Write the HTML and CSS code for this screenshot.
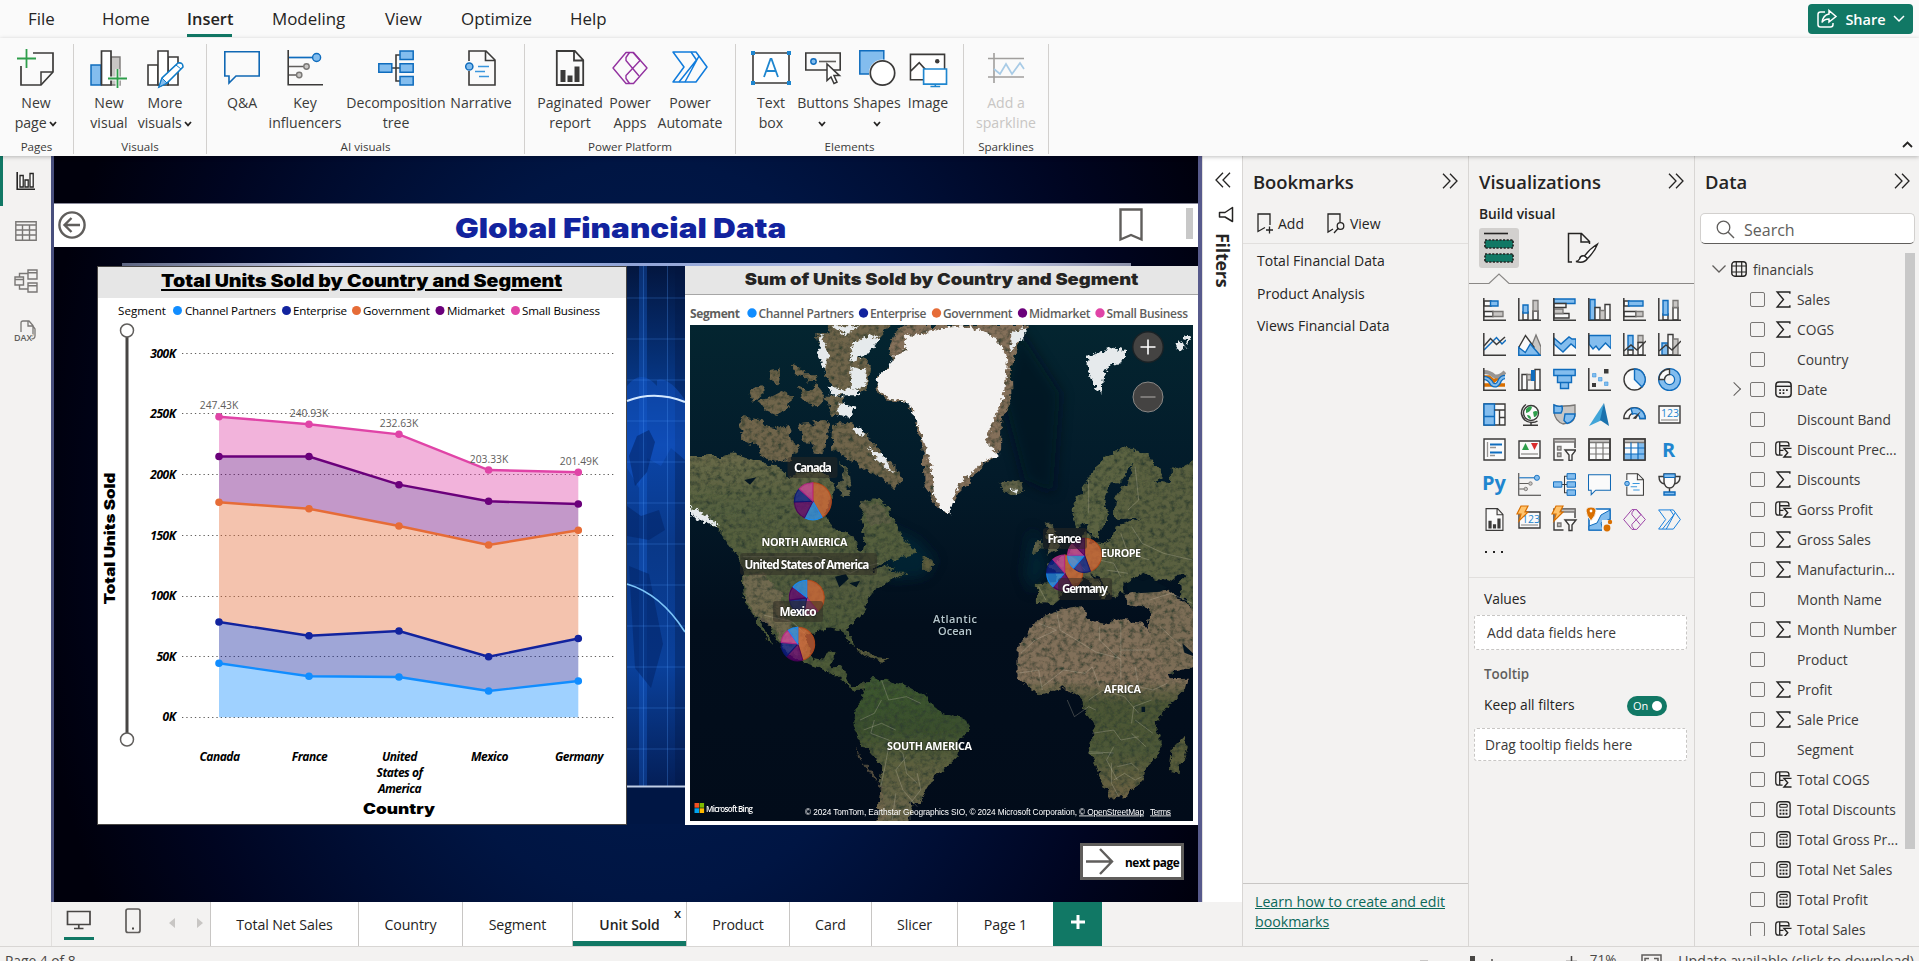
FILE: index.html
```html
<!DOCTYPE html>
<html lang="en">
<head>
<meta charset="utf-8">
<title>Global Financial Data</title>
<link rel="stylesheet" href="styles.css">
</head>
<body>
<svg class="defs" width="0" height="0" aria-hidden="true">
  <defs>
    <symbol id="i-chev" viewBox="0 0 8 6"><path d="M1 1l3 3.4L7 1" fill="none" stroke="#252423" stroke-width="1.7"/></symbol>
    <symbol id="i-dbl" viewBox="0 0 16 16"><path d="M1 .8L8 8l-7 7.2M8 .8L15 8l-7 7.2" fill="none" stroke="#252423" stroke-width="1.3"/></symbol>
    <symbol id="i-key" viewBox="0 0 36 36"><path d="M1.2 0v34.8H36" fill="none" stroke="#3b3a39" stroke-width="1.6"/><path d="M2 7.5h24" stroke="#0f6cbd" stroke-width="1.7"/><path d="M2 16.5h15M2 25h8" stroke="#605e5c" stroke-width="1.6"/><circle cx="29.6" cy="7.5" r="4" fill="#83bdee" stroke="#0f6cbd" stroke-width="1.4"/><circle cx="19.5" cy="16.5" r="2.7" fill="#c8c6c4" stroke="#797775" stroke-width="1.4"/><circle cx="12.2" cy="25" r="2.7" fill="#c8c6c4" stroke="#797775" stroke-width="1.4"/></symbol>
    <symbol id="i-tree" viewBox="0 0 36 36"><path d="M14 18h8M22 5h-4v26h4" fill="none" stroke="#3b3a39" stroke-width="1.6"/><g fill="#83bdee" stroke="#0f6cbd" stroke-width="1.5"><path d="M.8 13.8h13v8.4H.8zM22 1h13.2v8.6H22zM22 13.8h13.2v8.4H22zM22 26.4h13.2V35H22z"/></g></symbol>
    <symbol id="i-narr" viewBox="0 0 36 36"><path d="M6 11V1h17l9 9v25H6V21M22.5 1v9.5H32" fill="#fafafa" stroke="#3b3a39" stroke-width="1.6"/><circle cx="6.3" cy="16.5" r="3.6" fill="#83bdee" stroke="#0f6cbd" stroke-width="1.5"/><path d="M15 16.5h11M12 21.5h10M16 26.5h10" stroke="#3a96dd" stroke-width="1.6"/></symbol>
    <symbol id="i-pag" viewBox="0 0 36 36"><path d="M4.8 1h18l8.4 9v25H4.8zM22 1v9.5h9" fill="#fafafa" stroke="#3b3a39" stroke-width="1.8"/><path d="M8.500 20h5v12h-5zM15.500 25.500h5V32h-5zM22.500 16.500h5V32h-5z" fill="#3b3a39"/></symbol>
    <symbol id="i-apps" viewBox="0 0 36 36"><g fill="none" stroke="#9332a0" stroke-width="1.400" stroke-linejoin="round"><path d="M14 2.500h7.500L35 18 21.500 33.500H14L1 18z"/><path d="M17.500 2.500L14 7.500v3L27 26M21 2.500L28 10.500 14 25.500v3l3.500 5"/></g></symbol>
    <symbol id="i-auto" viewBox="0 0 36 36"><g fill="none" stroke="#0f7bdc" stroke-width="1.500" stroke-linejoin="round"><path d="M1 3h23l11 15-11 15H1l11-15z"/><path d="M19 3l5.500 8L7 33M27 7L13 33"/></g></symbol>
    <symbol id="i-qa" viewBox="0 0 36 36"><path d="M.8 2.800h34.400V27H12l-7 7v-7H.8z" fill="#fafafa" stroke="#1068b4" stroke-width="1.600"/></symbol>

    <symbol id="i-axes" viewBox="0 0 23 23"><path d="M.8 0v22.200H23" fill="none" stroke="#3b3a39" stroke-width="1.500"/></symbol>
    <symbol id="t-sum" viewBox="0 0 16 16"><path d="M14 2.500V1H2l6 7-6 7h12v-1.500" fill="none" stroke="#252423" stroke-width="1.300"/></symbol>
    <symbol id="t-table" viewBox="0 0 16 16"><rect x=".8" y=".8" width="14.400" height="14.400" rx="3" fill="none" stroke="#252423" stroke-width="1.400"/><path d="M1 5h14M1 11h14M5.300 1v14M10.700 1v14" stroke="#252423" stroke-width="1.200"/></symbol>
    <symbol id="t-col" viewBox="0 0 18 18"><path d="M8 15H3.500Q.8 15 .8 12V4Q.8 1 3.500 1H12q2.800 0 2.800 3v2M5 1v14M5 5h10M5 10h4" fill="none" stroke="#252423" stroke-width="1.400"/><path d="M17.500 7.800H9.500l4 4.600-4 4.600h8" fill="none" stroke="#252423" stroke-width="1.500"/></symbol>
    <symbol id="t-cal" viewBox="0 0 16 16"><rect x=".8" y="1" width="14.400" height="14" rx="3" fill="none" stroke="#252423" stroke-width="1.400"/><path d="M1 5h14" stroke="#252423" stroke-width="1.300"/><path d="M4 11.500h1.600M7.200 11.500h1.600M7.200 8.500h1.600M10.400 8.500H12M4 8.500h1.600" stroke="#252423" stroke-width="1.600"/></symbol>
    <symbol id="t-calc" viewBox="0 0 16 18"><rect x="1" y=".8" width="14" height="16.400" rx="3" fill="none" stroke="#252423" stroke-width="1.400"/><rect x="4" y="3.600" width="8" height="3" rx="1" fill="none" stroke="#252423" stroke-width="1.200"/><path d="M3.800 10h2M7 10h2M10.200 10h2M3.800 13.500h2M7 13.500h2M10.200 13.500h2" stroke="#252423" stroke-width="1.900"/></symbol>
  </defs>
</svg>

<header class="menu">
  <nav class="tabs">
    <a>File</a><a>Home</a><a class="on">Insert</a><a>Modeling</a><a>View</a><a>Optimize</a><a>Help</a>
  </nav>
  <button class="share"><svg width="22" height="20" viewBox="0 0 22 20" fill="none" stroke="#fff" stroke-width="1.500"><path d="M9 3H4.500Q2 3 2 5.500v10Q2 18 4.500 18h10q2.500 0 2.500-2.500V14"/><path d="M13 1.500L20 7.500l-7 5.500V10q-5 0-7 3.500Q7 6 13 5z"/></svg>Share<svg width="12" height="8" viewBox="0 0 12 8"><path d="M1 1l5 5 5-5" fill="none" stroke="#fff" stroke-width="1.500"/></svg></button>
</header>

<section class="ribbon">
  <div class="group g-pages"><div class="tools">
    <div class="tool w72"><svg width="38" height="38" viewBox="0 0 38 38"><path d="M16 4h20v19L24 36H4V17" fill="none" stroke="#3b3a39" stroke-width="1.700"/><path d="M36 23H24v13" fill="none" stroke="#3b3a39" stroke-width="1.500"/><path d="M0 9.500h19M9.500 0v19" stroke="#2e9e4b" stroke-width="1.800"/></svg><span>New<br>page <svg class="chev"><use href="#i-chev"/></svg></span></div>
  </div><small>Pages</small></div>
  <div class="group g-vis"><div class="tools">
    <div class="tool w56"><svg width="38" height="38" viewBox="0 0 38 38"><path d="M1 16h10v20H1z" fill="#83bdee" stroke="#0f6cbd" stroke-width="1.500"/><path d="M21 8h9v28h-9z" fill="#c8c6c4" stroke="#797775" stroke-width="1.400"/><path d="M11.500 2H21v34h-9.500z" fill="#fff" stroke="#3b3a39" stroke-width="1.700"/><path d="M18 29.500h19M27.500 20v19" stroke="#fafafa" stroke-width="4"/><path d="M18 29.500h19M27.500 20v19" stroke="#2e9e4b" stroke-width="1.800"/></svg><span>New<br>visual</span></div>
    <div class="tool w56"><svg width="38" height="38" viewBox="0 0 38 38"><g fill="#fff" stroke="#3b3a39" stroke-width="1.600"><path d="M2 16h10v20H2zM22 8h10v28H22z"/><path d="M12 2h10v34H12z"/></g><path d="M13 38l3-9L32 14q5-1 5 4L21 34z" fill="#fff" stroke="#0f7bc8" stroke-width="1.600"/><path d="M13 38l3-9 5 5z" fill="#83bdee" stroke="#0f7bc8"/><path d="M30 16l5 4" stroke="#0f7bc8"/></svg><span>More<br>visuals <svg class="chev"><use href="#i-chev"/></svg></span></div>
  </div><small>Visuals</small></div>
  <div class="group g-ai"><div class="tools">
    <div class="tool w52"><svg width="36" height="38"><use href="#i-qa" height="36"/></svg><span>Q&amp;A</span></div>
    <div class="tool w74"><svg width="36" height="38"><use href="#i-key" y="1" height="36"/></svg><span>Key<br>influencers</span></div>
    <div class="tool w108"><svg width="36" height="38"><use href="#i-tree" y="1" height="36"/></svg><span>Decomposition<br>tree</span></div>
    <div class="tool w62"><svg width="36" height="38"><use href="#i-narr" y="1" height="36"/></svg><span>Narrative</span></div>
  </div><small>AI visuals</small></div>
  <div class="group g-pp"><div class="tools">
    <div class="tool w70"><svg width="36" height="38"><use href="#i-pag" y="1" height="36"/></svg><span>Paginated<br>report</span></div>
    <div class="tool w50"><svg width="36" height="38"><use href="#i-apps" y="1" height="36"/></svg><span>Power<br>Apps</span></div>
    <div class="tool w70"><svg width="36" height="38"><use href="#i-auto" height="36"/></svg><span>Power<br>Automate</span></div>
  </div><small>Power Platform</small></div>
  <div class="group g-el"><div class="tools">
    <div class="tool w46"><svg width="40" height="38" viewBox="0 0 40 38"><path d="M2 4h36v30H2z" fill="#fff" stroke="#3b3a39" stroke-width="1.600"/><path d="M0 2h4v4H0zM36 2h4v4h-4zM0 32h4v4H0zM36 32h4v4h-4z" fill="#1f86cf"/><path d="M13 28l6.500-18h1L27 28M15.500 22h9" fill="none" stroke="#1f86cf" stroke-width="1.800"/></svg><span>Text<br>box</span></div>
    <div class="tool w58"><svg width="36" height="38" viewBox="0 0 36 38"><path d="M.8 4h34.400v17H.8z" fill="#fafafa" stroke="#3b3a39" stroke-width="1.600"/><circle cx="8.500" cy="12.500" r="2.700" fill="#83bdee" stroke="#0f6cbd" stroke-width="1.400"/><path d="M14 12.500h17" stroke="#605e5c" stroke-width="1.600"/><path d="M22 15v16.500l4-3.500 3 6.500 3-1.400-3-6.500h5.500z" fill="#fff" stroke="#3b3a39" stroke-width="1.500"/></svg><span>Buttons<br><svg class="chev"><use href="#i-chev"/></svg></span></div>
    <div class="tool w50"><svg width="36" height="38" viewBox="0 0 36 38"><path d="M.8 1.800h24V25H.8z" fill="#83bdee" stroke="#0f6cbd" stroke-width="1.500"/><circle cx="23.500" cy="24" r="13.500" fill="#fafafa"/><circle cx="23.500" cy="24" r="12.200" fill="#fff" stroke="#3b3a39" stroke-width="1.700"/></svg><span>Shapes<br><svg class="chev"><use href="#i-chev"/></svg></span></div>
    <div class="tool w52"><svg width="38" height="39" viewBox="0 0 38 39"><path d="M1 5.500h35v26H1zM1 23l9-9 9 10" fill="#fff" stroke="#3b3a39" stroke-width="1.600"/><circle cx="28.500" cy="12.500" r="2.300" fill="#3b3a39"/><path d="M14.500 20.500H38V36H14.500z" fill="#fff" stroke="#1f86cf" stroke-width="1.700"/><path d="M26.500 36v3M21.500 38.500h10" stroke="#1f86cf" stroke-width="1.600"/></svg><span>Image</span></div>
  </div><small>Elements</small></div>
  <div class="group g-sp"><div class="tools">
    <div class="tool w72 off"><svg width="36" height="38" viewBox="0 0 36 38"><path d="M6 4v30M0 9.500h36M0 28h36" stroke="#a19f9d" stroke-width="1.600"/><path d="M6 20l6 5 6-10 6 10 8-11 4 6" fill="none" stroke="#a8cbe6" stroke-width="1.700"/></svg><span>Add a<br>sparkline</span></div>
  </div><small>Sparklines</small></div>
  <svg class="collapse" width="11" height="7" viewBox="0 0 11 7"><path d="M1 6l4.500-4.500L10 6" fill="none" stroke="#252423" stroke-width="1.800"/></svg>
</section>

<main class="work">
  <aside class="views">
    <div class="view on"><svg width="20" height="20" viewBox="0 0 20 20"><path d="M1.200 1v17.300H19" fill="none" stroke="#252423" stroke-width="1.600"/><path d="M4 4.500h3.200V16H4zM9 9h3.200v7H9zM14 2.500h3.200V16H14z" fill="#fff" stroke="#252423" stroke-width="1.300"/></svg></div>
    <div class="view"><svg width="22" height="20" viewBox="0 0 22 20"><path d="M.8.8h20.400v18.400H.8zM.8 4h20.400M.8 9h20.400M.8 14h20.400M7.500 4v15M14.500 4v15" fill="none" stroke="#797775" stroke-width="1.400"/></svg></div>
    <div class="view"><svg width="24" height="24" viewBox="0 0 24 24"><path d="M1 8h8.500v8H1zM1 10.500h8.500M14 1h9v9h-9zM14 3.800h9M14 14h9v9h-9zM14 16.800h9M5.500 8V4.500H14M5.500 16v4H14" fill="none" stroke="#797775" stroke-width="1.400"/></svg></div>
    <div class="view"><svg width="24" height="22" viewBox="0 0 24 22"><path d="M7 12V3q0-2 2-2h6l4 4.500V14q0 2-2 2M14 1v5h5M19 6l2 3v7q0 3-4 3" fill="none" stroke="#797775" stroke-width="1.300"/><text x="0" y="20.500" class="dax">DAX</text></svg></div>
  </aside>

  <section class="center">
    <div class="stage">
      <div class="canvas">
        <div class="banner">
          <svg class="back" width="28" height="28" viewBox="0 0 28 28" fill="none" stroke="#605e5c" stroke-width="2.400"><circle cx="14" cy="14" r="12.600"/><path d="M22 14H6.500M13.500 7L6.500 14l7 7"/></svg>
          <h1><span>Global Financial Data</span></h1>
          <svg class="mark" width="24" height="34" viewBox="0 0 24 34"><path d="M1.500 1.500h21v30L12 27 1.500 31.500z" fill="none" stroke="#605e5c" stroke-width="2.400"/></svg>
          <i class="thumb"></i>
        </div>
        <div class="strip"></div>
        <div class="visuals">
          <article class="card chart">
            <h2><span>Total Units Sold by Country and Segment</span></h2>
            <svg width="528" height="525" viewBox="98 298 528 525">
              <g class="leg">
                <text x="118" y="315" textLength="48">Segment</text>
                <circle cx="177.500" cy="310.500" r="4.500" fill="#118dff"/><text x="185" y="315" textLength="91">Channel Partners</text>
                <circle cx="286.500" cy="310.500" r="4.500" fill="#12239e"/><text x="293" y="315" textLength="54">Enterprise</text>
                <circle cx="356.500" cy="310.500" r="4.500" fill="#e66c37"/><text x="363" y="315" textLength="67">Government</text>
                <circle cx="440" cy="310.500" r="4.500" fill="#6b007b"/><text x="447" y="315" textLength="58">Midmarket</text>
                <circle cx="515.500" cy="310.500" r="4.500" fill="#e044a7"/><text x="522" y="315" textLength="78">Small Business</text>
              </g>
              <path d="M127 337v396" stroke="#484644" stroke-width="3"/>
              <circle cx="127" cy="330.500" r="6.500" fill="#fff" stroke="#605e5c" stroke-width="1.500"/>
              <circle cx="127" cy="739.500" r="6.500" fill="#fff" stroke="#605e5c" stroke-width="1.500"/>
              <g class="grid"><path d="M182 353.500h432M182 413.500h432M182 474.500h432M182 535.500h432M182 596.500h432M182 656.500h432M182 717.500h432"/></g>
              <g opacity=".4">
                <path fill="#e044a7" d="M219 416.700L309 424.300 399 434.300 488.600 470 578.300 472.300V504L488.600 501.300 399 484.700 309 456.500H219z"/>
                <path fill="#6b007b" d="M219 456.500H309L399 484.700 488.600 501.300 578.300 504V530.300L488.600 545 399 526 309 508.700 219 502.300z"/>
                <path fill="#e66c37" d="M219 502.300L309 508.700 399 526 488.600 545 578.300 530.300V638.500L488.600 656.700 399 631 309 635.700 219 622z"/>
                <path fill="#12239e" d="M219 622L309 635.700 399 631 488.600 656.700 578.300 638.500V681L488.600 691 399 677 309 676.300 219 663.300z"/>
                <path fill="#118dff" d="M219 663.300L309 676.300 399 677 488.600 691 578.300 681V717.300H219z"/>
              </g>
              <g fill="none" stroke-width="2.400">
                <path stroke="#e044a7" d="M219 416.700L309 424.300 399 434.300 488.600 470 578.300 472.300"/>
                <path stroke="#6b007b" d="M219 456.500H309L399 484.700 488.600 501.300 578.300 504"/>
                <path stroke="#e66c37" d="M219 502.300L309 508.700 399 526 488.600 545 578.300 530.300"/>
                <path stroke="#12239e" d="M219 622L309 635.700 399 631 488.600 656.700 578.300 638.500"/>
                <path stroke="#118dff" d="M219 663.300L309 676.300 399 677 488.600 691 578.300 681"/>
              </g>
              <g class="dots">
                <path stroke="#e044a7" d="M219 416.700h0M309 424.300h0M399 434.300h0M488.600 470h0M578.300 472.300h0"/>
                <path stroke="#6b007b" d="M219 456.500h0M309 456.500h0M399 484.700h0M488.600 501.300h0M578.300 504h0"/>
                <path stroke="#e66c37" d="M219 502.300h0M309 508.700h0M399 526h0M488.600 545h0M578.300 530.300h0"/>
                <path stroke="#12239e" d="M219 622h0M309 635.700h0M399 631h0M488.600 656.700h0M578.300 638.500h0"/>
                <path stroke="#118dff" d="M219 663.300h0M309 676.300h0M399 677h0M488.600 691h0M578.300 681h0"/>
              </g>
              <g class="vals"><text x="219" y="409">247.43K</text><text x="309" y="417">240.93K</text><text x="399" y="427">232.63K</text><text x="489" y="463">203.33K</text><text x="579" y="465">201.49K</text></g>
              <g class="ax end"><text x="175.500" y="357.500">300K</text><text x="175.500" y="418">250K</text><text x="175.500" y="478.500">200K</text><text x="175.500" y="539.500">150K</text><text x="175.500" y="600">100K</text><text x="175.500" y="660.500">50K</text><text x="175.500" y="721">0K</text></g>
              <g class="ax mid"><text x="219.500" y="761">Canada</text><text x="309.500" y="761">France</text><text x="399.500" y="761">United</text><text x="399.500" y="777">States of</text><text x="399.500" y="793">America</text><text x="489.500" y="761">Mexico</text><text x="579" y="761">Germany</text></g>
              <text class="axt" x="399" y="813.500" textLength="72" lengthAdjust="spacingAndGlyphs">Country</text>
              <text class="axt" transform="translate(115 538.500) rotate(-90)" textLength="132" lengthAdjust="spacingAndGlyphs">Total Units Sold</text>
            </svg>
          </article>

          <svg class="tech" width="58" height="558" viewBox="0 0 58 558">
            <defs><linearGradient id="tg" x1="0" y1="0" x2="0" y2="1"><stop offset="0" stop-color="#03163f"/><stop offset=".18" stop-color="#06327a"/><stop offset=".32" stop-color="#0b45a8"/><stop offset=".5" stop-color="#093888"/><stop offset=".72" stop-color="#0a409a"/><stop offset=".93" stop-color="#041f58"/><stop offset=".935" stop-color="#001644"/><stop offset="1" stop-color="#001644"/></linearGradient></defs>
            <rect width="58" height="558" fill="url(#tg)"/>
            <path d="M12 0h8v520h-8z" fill="#1b6be6" opacity=".3"/>
            <path d="M48 0h10v520H48z" fill="#02143c" opacity=".3"/>
            <path d="M0 120q14-18 30 0v-6q12-4 28 20v60l-14-12-10 18-14-8-8 30-12-20z" fill="#1557c9" opacity=".45"/>
            <path d="M2 190l8-20 12-6 6 12-8 30-12 14zM0 240l14 10 18-6 6 20-16 10-22-4zM2 300l20 8 14 70-12 44-16-20z" fill="#04276a" opacity=".6"/>
            <path d="M0 32h58M0 73h58M0 114h58M0 155h58M0 196h58M0 237h58M0 278h58M0 319h58M0 360h58M0 401h58M0 442h58M0 483h58M16.500 0v520M40.500 0v520" stroke="#4d94f5" stroke-opacity=".3" fill="none"/>
            <path d="M0 135Q28 124 58 136" stroke="#d4e9ff" stroke-width="2" fill="none"/>
            <path d="M0 318Q34 328 58 366" stroke="#7cc4f8" stroke-width="1.700" fill="none"/>
            <path d="M0 520.500h58" stroke="#c0cee5" stroke-width="2"/>
          </svg>

          <article class="card mapcard">
            <h2><span>Sum of Units Sold by Country and Segment</span></h2>
            <svg class="mleg" width="513" height="30" viewBox="685 295 513 30">
              <text x="690" y="317.500" textLength="50" class="key">Segment</text>
              <circle cx="752" cy="313" r="4.700" fill="#118dff"/><text x="758.500" y="317.500" textLength="95.500">Channel Partners</text>
              <circle cx="863.500" cy="313" r="4.700" fill="#12239e"/><text x="870" y="317.500" textLength="56.500">Enterprise</text>
              <circle cx="936.500" cy="313" r="4.700" fill="#e66c37"/><text x="943" y="317.500" textLength="69.500">Government</text>
              <circle cx="1022.500" cy="313" r="4.700" fill="#6b007b"/><text x="1029" y="317.500" textLength="61.500">Midmarket</text>
              <circle cx="1100" cy="313" r="4.700" fill="#e044a7"/><text x="1106.500" y="317.500" textLength="81.500">Small Business</text>
            </svg>
            <div class="map">
              <svg class="sat" viewBox="84 375 1408 1488" preserveAspectRatio="none">
                <defs>
                  <linearGradient id="sea" x1="0" y1="0" x2="0" y2="1"><stop offset="0" stop-color="#042530"/><stop offset=".3" stop-color="#031b2a"/><stop offset=".6" stop-color="#020e1c"/><stop offset="1" stop-color="#020c1a"/></linearGradient>
                  <linearGradient id="land" gradientUnits="userSpaceOnUse" x1="0" y1="740" x2="0" y2="1460"><stop offset="0" stop-color="#6c6b4a"/><stop offset=".25" stop-color="#55603f"/><stop offset=".6" stop-color="#525b3c"/><stop offset="1" stop-color="#4c5a36"/></linearGradient>
                  <linearGradient id="afr" gradientUnits="userSpaceOnUse" x1="0" y1="1220" x2="0" y2="1800"><stop offset="0" stop-color="#80705a"/><stop offset=".38" stop-color="#82705a"/><stop offset=".5" stop-color="#4c5535"/><stop offset=".75" stop-color="#4d5837"/><stop offset="1" stop-color="#6f6346"/></linearGradient>
                  <linearGradient id="sam" gradientUnits="userSpaceOnUse" x1="0" y1="1440" x2="0" y2="1860"><stop offset="0" stop-color="#3c5630"/><stop offset=".35" stop-color="#3a4f2d"/><stop offset=".6" stop-color="#5b5f3e"/><stop offset="1" stop-color="#6c664c"/></linearGradient>
                  <filter id="rough" x="-5%" y="-5%" width="110%" height="110%">
                    <feTurbulence type="fractalNoise" baseFrequency=".045" numOctaves="4" seed="4" result="n"/>
                    <feDisplacementMap in="SourceGraphic" in2="n" scale="24" xChannelSelector="R" yChannelSelector="G" result="d"/>
                    <feTurbulence type="fractalNoise" baseFrequency=".07" numOctaves="5" seed="9"/>
                    <feColorMatrix values="0 0 0 0 .03  0 0 0 0 .05  0 0 0 0 .03  1.500 1.500 0 0 -1.300"/>
                    <feComposite in2="d" operator="in" result="g"/>
                    <feMerge><feMergeNode in="d"/><feMergeNode in="g"/></feMerge>
                  </filter>
                  <filter id="ice" x="-5%" y="-5%" width="110%" height="110%">
                    <feTurbulence type="fractalNoise" baseFrequency=".08" numOctaves="4" seed="2"/>
                    <feDisplacementMap in="SourceGraphic" scale="22" xChannelSelector="R" yChannelSelector="G"/>
                  </filter>
                  <filter id="soft" x="-20%" y="-20%" width="140%" height="140%"><feGaussianBlur stdDeviation="18"/></filter>
                </defs>
                <path fill="url(#sea)" d="M84 375h1408v1488H84z"/>
                <g filter="url(#soft)">
                  <path d="M600 960L720 1020 770 1080 740 1130 640 1140zM1040 980L1090 1100 1040 1180 1020 1120z" fill="#0b3440" opacity=".5"/>
                  <path d="M1000 380l120 200-20 300-80-40-60-250z" fill="#020d1d" opacity=".6"/>
                </g>
                <g filter="url(#rough)">
                  <path fill="url(#land)" d="M60 765L130 765 170 772 205 760 245 775 290 787 330 801 360 831 400 817 440 797 470 830 490 860 480 900 462 925 470 965 485 985 520 1000 546 1012 553 1050 568 1052 572 1030 568 990 560 950 575 905 610 900 640 925 650 950 665 985 690 1025 715 1050 700 1068 640 1082 605 1100 590 1118 612 1105 640 1095 655 1100 640 1110 660 1118 690 1118 670 1130 640 1142 630 1155 605 1165 585 1195 578 1215 572 1240 560 1255 530 1275 524 1290 540 1320 542 1342 528 1325 515 1297 480 1285 440 1290 415 1300 410 1320 415 1350 430 1375 460 1380 470 1358 492 1355 488 1375 475 1392 482 1402 510 1400 523 1412 518 1440 535 1455 560 1455 585 1445 580 1468 550 1470 530 1462 505 1437 480 1417 440 1402 400 1387 360 1364 335 1332 315 1292 300 1267 285 1247 278 1257 300 1305 315 1332 300 1320 275 1272 262 1242 240 1212 233 1172 232 1112 222 1072 200 1042 180 1012 150 972 120 947 60 925z"/>
                  <path fill="#7a6d55" opacity=".75" d="M236 1130L290 1120 340 1180 350 1260 410 1300 405 1370 350 1350 320 1290 270 1250 240 1200z"/>
                  <path fill="#70654c" d="M226 650l64 16 12 24-24 30-20 14-34-14zM290 675l40 12 30-14 10 50 16 20-20 34-50 8-30-20-16-40zM390 670l24-4 20 20-6 40-30-4zM430 664l36-4 6 40-20 66-26-6zM480 672l56-4 50 44 40 60 40 40 10 26-20 30-30-34-40-18-44-30-60-40zM250 575l34-20 6 24-30 30zM280 600l30-8 34-20 26 12-10 40-34 20-30-14zM388 560l30 10 20-20 20 50-20 22-40-24zM460 590l50 0 10 50-40 8zM366 488l26 8 10 24-20 12zM400 520l36 0 6 26-28 0zM304 510l34-4-6 50-24-14zM440 400l60 0 30 60 60 30-12 80-80 16-30-50zM470 370h180l-50 60-80 60-30-50z"/>
                  <path fill="#5f6146" d="M496 845l22-6 14 46-26 6zM560 905l60 10 30 50-60 10-20-30zM508 785l24 40 4 40-24-20zM1048 1030l22-12-4 40-22 8zM1082 968l16 0 8 26 20 50-44 20 10-36-12-26zM945 850l66-10 8 28-30 20-24-14z"/>
                  <path fill="#84705a" d="M640 445L655 400 690 375 1030 375 1000 440 982 500 984 600 955 660 955 740 940 768 900 790 870 845 825 885 808 940 790 935 765 900 738 860 735 740 715 650 690 605 640 602 615 580 608 530 650 500z"/>
                  <path fill="#5c6443" d="M1152 930L1175 880 1205 830 1235 775 1310 740 1370 770 1345 790 1325 785 1300 830 1285 850 1262 850 1245 890 1255 940 1240 975 1225 1010 1205 1005 1195 970 1165 980z"/>
                  <path fill="#5a6041" d="M1325 785L1370 770 1410 830 1385 845 1430 850 1430 800 1450 810 1510 775 1510 1240 1495 1230 1460 1190 1455 1145 1480 1120 1440 1130 1420 1145 1350 1120 1300 1150 1300 1180 1285 1172 1270 1195 1245 1160 1225 1130 1200 1118 1170 1145 1140 1160 1125 1190 1100 1213 1055 1208 1055 1152 1108 1150 1112 1118 1085 1095 1120 1075 1150 1050 1180 1030 1185 1005 1200 1000 1205 1025 1240 1030 1270 1015 1275 980 1320 965 1350 955 1290 960 1270 940 1275 895 1295 860 1310 850z"/>
                  <path fill="#5e6143" d="M1180 1122L1200 1115 1228 1148 1258 1182 1240 1195 1212 1160z"/>
                  <path fill="#7b6d57" d="M1300 1185L1340 1175 1420 1170 1460 1200 1510 1240 1510 1400 1411 1426 1385 1354 1365 1285 1371 1222 1305 1212z"/>
                  <path fill="url(#afr)" d="M1115 1230l66-14 12 34 50 22 48-14 60 12 20 30 30 80 26 52 54-2-10 40-50 52-34 48 14 44 0 46-40 40-10 44-50 46-44 6-30-74-24-76 14-66-30-50-6-34-50-32-70 22-60-56v-80l40-70 20-30z"/>
                  <path fill="#595c3b" d="M1465 1610l12 30-26 80-26-10 4-60z"/>
                  <path fill="url(#sam)" d="M600 1430l40 16 50 14 60 32 14 32 36 16 60 20 10 26-30 34-10 50-30 32-32 28-24 42-14 34-30 0 10 30-20 50-82 4 4-100 10-84-24-36-40-50-20-50 4-42 26-30 4-40z"/>
                  <path fill="#75664f" opacity=".7" d="M545 1640l30 60 50 70 14 90h-30l4-90-8-40-50-60z"/>
                  <path fill="#5b5c3d" d="M545 1345l40 10 30 24-40-10zM600 1374l40 4-20 8zM735 1072l26 10 0 30-24 0z"/>
                </g>
                <g fill="#031522">
                  <path d="M1305 1155l23-22 24 10 20-8 48 28-20 12-54 4-36-6zM1462 1330l30 30v8l-24-10z"/>
                  <path d="M490 1130l30-8 8 14-26 26zM530 1150l30-8-10 20zM1348 1520h10v16h-10zM236 840l34-8-18 22z"/>
                </g>
                <g filter="url(#ice)">
                  <path fill="#f3f2f1" d="M690 400L720 408 790 385 850 378 900 390 935 410 955 440 972 470 968 530 962 590 945 630 925 680 912 730 950 765 900 785 870 820 835 850 810 940 790 933 768 890 760 800 738 730 715 650 692 602 640 596 612 572 606 530 640 505 655 470 690 452 682 420z"/>
                  <path fill="#e6eaec" d="M1195 470l44-16 30-12 40 12-18 36-32 4-18 30-6 58-22-30-14-40zM1440 430l20-6 14 20-20 10zM1466 404l20 10-8 20zM980 400l46-20-4 26-40 50zM540 430l50-24 26 10-36 50-50 20zM536 500l44 10-6 50-40 10zM500 610l50 10-20 30-30-6zM450 400l22 60-10 50-20-40zM480 376h80l-40 30zM470 560l90 10 0 16-80 0zM540 680l26 4 6 24-26-6zM580 740l50 30 20 50-50-50zM984 870l20-2-10 18zM84 920l30 14 50 40-10 6-70-34z"/>
                </g>
                <g class="borders" fill="none">
                  <path d="M1230 1280v40l60 60v60M1290 1270v100M1290 1350h80M1110 1230l10 60 100 66 70 20M1060 1270l50 20-60 30-40 40M1000 1420l60-10 10 60M1070 1460l60-50 60 10 20-20 20 60M1140 1500l20 50 40-30 20 10M1200 1500l40-30 60 20 40 50M1210 1600l60-10 20 30 50-10M1330 1400l10 60 40 10 40-20M1270 1640l-20 40 30 60M1240 1660h-40M1200 1655l70 4M1280 1700l40-10 20 20M1330 1560l50 40M1320 1600l40 40M1270 1740l30-20 30 20 20-10M1264 1690v60l20 40M1376 1500l-50 20-6 50"/>
                  <path d="M620 1440l20 60 50-10 40 20M620 1500l-20 40-40 20M600 1560l-10 40 50 20 40 40 10 60 30 30M640 1640l-10 60-12 60M690 1670l-30 40 20 60 40 50M720 1720l10 50-30 40v50M660 1780l-10 80M570 1590l50-20 40 20"/>
                  <path d="M232 1070h210l50 30 40 20 40-20 40-10M290 1245l80 20 40 40M1230 1080l40 10 20 40M1290 1000l20 60 60 20M1200 840l0 100M1330 800l10 100-30 30M1250 1110l60 10M1370 1200l60-20 60 30M1400 1280l60 60M1320 980l30 50 60 30 80 20M1060 1160l20 40M1140 1060l50 50"/>
                </g>
              </svg>
              <svg class="pies" width="503" height="496" viewBox="690 325 503 496">
                <g stroke-opacity=".9" fill-opacity=".68">
                  <g transform="translate(812.900 501.300) scale(18.500)" class="pie"><path class="o" d="M0 0V-1A1 1 0 0 1 .5 .866z"/><path class="b" d="M0 0L.5 .866A1 1 0 0 1-.454 .891z"/><path class="p" d="M0 0L-.454 .891A1 1 0 0 1-.999 .035z"/><path class="n" d="M0 0L-.999 .035A1 1 0 0 1-.743-.669z"/><path class="k" d="M0 0L-.743-.669A1 1 0 0 1 0-1z"/></g>
                  <g transform="translate(806.800 597.700) scale(17.500)" class="pie"><path class="o" d="M0 0V-1A1 1 0 0 1 .643 .766z"/><path class="k" d="M0 0L.643 .766A1 1 0 0 1-.174 .985z"/><path class="n" d="M0 0L-.174 .985A1 1 0 0 1-.99 .139z"/><path class="p" d="M0 0L-.99 .139A1 1 0 0 1-.788-.616z"/><path class="b" d="M0 0L-.788-.616A1 1 0 0 1 0-1z"/></g>
                  <g transform="translate(797.900 644) scale(16.800)" class="pie"><path class="o" d="M0 0V-1A1 1 0 0 1 .292 .956z"/><path class="p" d="M0 0L.292 .956A1 1 0 0 1-.682 .731z"/><path class="n" d="M0 0L-.682 .731A1 1 0 0 1-.996-.087z"/><path class="k" d="M0 0L-.996-.087A1 1 0 0 1-.574-.819z"/><path class="b" d="M0 0L-.574-.819A1 1 0 0 1 0-1z"/></g>
                  <g transform="translate(1064.600 573) scale(18)" class="pie"><path class="o" d="M0 0V-1A1 1 0 0 1 .5 .866z"/><path class="p" d="M0 0L.5 .866A1 1 0 0 1-.643 .766z"/><path class="b" d="M0 0L-.643 .766A1 1 0 0 1-1 0z"/><path class="n" d="M0 0H-1A1 1 0 0 1-.656-.755z"/><path class="k" d="M0 0L-.656-.755A1 1 0 0 1 0-1z"/></g>
                  <g transform="translate(1084.600 555.300) scale(17)" class="pie"><path class="o" d="M0 0V-1A1 1 0 0 1 .342 .94z"/><path class="n" d="M0 0L.342 .94A1 1 0 0 1-.643 .766z"/><path class="b" d="M0 0L-.643 .766A1 1 0 0 1-1 0z"/><path class="k" d="M0 0H-1A1 1 0 0 1-.707-.707z"/><path class="p" d="M0 0L-.707-.707A1 1 0 0 1 0-1z"/></g>
                </g>
                <g fill="#2b2722" fill-opacity=".5"><rect x="787.500" y="457" width="50" height="21" rx="3"/><rect x="740" y="553" width="137" height="22" rx="3"/><rect x="773" y="601" width="50" height="21" rx="3"/><rect x="1043" y="528" width="44" height="21" rx="3"/><rect x="1058" y="578" width="54" height="22" rx="3"/></g>
                <g class="places">
                  <text x="813" y="472" textLength="38">Canada</text><text x="807" y="569" textLength="125">United States of America</text><text x="798" y="616" textLength="37">Mexico</text><text x="1064.500" y="543" textLength="34">France</text><text x="1085" y="593" textLength="46">Germany</text>
                  <g class="cont"><text x="804.500" y="546" textLength="86">NORTH AMERICA</text><text x="1121" y="557" textLength="40">EUROPE</text><text x="1122.500" y="693" textLength="37">AFRICA</text><text x="929.500" y="750" textLength="85">SOUTH AMERICA</text></g>
                  <g class="ocean"><text x="955" y="623" textLength="44">Atlantic</text><text x="955" y="635" textLength="34">Ocean</text></g>
                </g>
                <path d="M694.500 803h4.500v4.700h-4.500z" fill="#f25022"/><path d="M699.600 803h4.500v4.700h-4.500z" fill="#7fba00"/><path d="M694.500 808.300h4.500v4.700h-4.500z" fill="#00a4ef"/><path d="M699.600 808.300h4.500v4.700h-4.500z" fill="#ffb900"/>
                <g class="credit"><text x="706" y="811.500" textLength="47">Microsoft Bing</text><g class="copy"><text x="805" y="814.500" textLength="272">© 2024 TomTom, Earthstar Geographics SIO, © 2024 Microsoft Corporation,</text><text x="1079" y="814.500" textLength="65" class="u">© OpenStreetMap</text><text x="1150" y="814.500" textLength="21" class="u">Terms</text></g></g>
                <g fill="#444342"><circle cx="1148" cy="347" r="16" fill="#1a2226"/><circle cx="1148" cy="347" r="14.500"/><circle cx="1148" cy="397" r="15" stroke="#8a8886"/></g>
                <path d="M1140.500 347h15M1148 339.500v15" stroke="#fff" stroke-width="1.600"/><path d="M1140.500 397h15" stroke="#8a8886" stroke-width="1.600"/>
              </svg>
            </div>
          </article>
        </div>
        <button class="next"><svg width="28" height="27" viewBox="0 0 28 27"><path d="M0 13.500h26M14 1l12 12.500L14 26" fill="none" stroke="#605e5c" stroke-width="2.400"/></svg>next page</button>
      </div>
      <aside class="filters">
        <svg class="flip" width="16" height="16"><use href="#i-dbl"/></svg>
        <svg class="fun" width="16" height="18" viewBox="0 0 16 18"><path d="M14.500 1.500v14L7 11H1.500V6.500H7z" fill="none" stroke="#252423" stroke-width="1.500" stroke-linejoin="round"/></svg>
        <b>Filters</b>
      </aside>
    </div>
    <div class="pages">
      <div class="devices">
        <span class="dev on"><svg width="26" height="20" viewBox="0 0 26 20"><path d="M1.500 1.500h22.500v13H1.500zM12.800 15v3M8 18.500h9.500" fill="none" stroke="#484644" stroke-width="1.700"/></svg></span>
        <svg width="16" height="26" viewBox="0 0 16 26"><rect x="1" y="1" width="14" height="23.500" rx="2" fill="none" stroke="#605e5c" stroke-width="1.700"/><path d="M7 20.500h2" stroke="#484644" stroke-width="2"/></svg>
        <svg class="arr" width="34" height="10" viewBox="0 0 34 10"><path d="M6 0v10L0 5zM28 0v10l6-5z" fill="#c8c6c4"/></svg>
      </div>
      <div class="ptab p1">Total Net Sales</div><div class="ptab p2">Country</div><div class="ptab p3">Segment</div><div class="ptab p4 on">Unit Sold<i>x</i></div><div class="ptab p5">Product</div><div class="ptab p6">Card</div><div class="ptab p7">Slicer</div><div class="ptab p8">Page 1</div>
      <div class="plus"><svg width="14" height="14" viewBox="0 0 14 14"><path d="M7 0v14M0 7h14" stroke="#fff" stroke-width="3"/></svg></div>
    </div>
  </section>

  <aside class="pane bookmarks">
    <h3>Bookmarks<svg width="16" height="16"><use href="#i-dbl"/></svg></h3>
    <div class="bm-tools">
      <svg width="16" height="21" viewBox="0 0 16 21"><path d="M8 14.500L1 18.500V1h12v11M9 17h7M12.500 13.500v7" fill="none" stroke="#252423" stroke-width="1.300"/></svg><span>Add</span>
      <svg class="v" width="18" height="21" viewBox="0 0 18 21"><path d="M6 16l-5 3V1h12v8M11.500 15L7 20" fill="none" stroke="#252423" stroke-width="1.300"/><circle cx="13.500" cy="13" r="3.300" fill="none" stroke="#252423" stroke-width="1.300"/></svg><span>View</span>
    </div>
    <ul><li>Total Financial Data</li><li>Product Analysis</li><li>Views Financial Data</li></ul>
    <footer>Learn how to create and edit bookmarks</footer>
  </aside>

  <aside class="pane viz">
    <h3>Visualizations<svg width="16" height="16"><use href="#i-dbl"/></svg></h3>
    <h4>Build visual</h4>
    <div class="modes">
      <span class="mode"><svg width="30" height="32" viewBox="0 0 30 32"><path d="M0 1.500h24" stroke="#252423" stroke-width="1.600"/><path d="M1 8h28v8H1zM1 22h28v8H1z" fill="#117865" stroke="#252423" stroke-width="1.700" stroke-dasharray="2.200 1.400"/></svg></span>
      <svg class="brush" width="32" height="32" viewBox="0 0 32 32"><path d="M5 30H1.500V1.500h13l8 8V12M14 1.500V10h8.500" fill="none" stroke="#252423" stroke-width="1.500"/><path d="M30.500 12q-8 5-13 12l3 2.600Q28 19 30.500 12zM17.500 24q-4-1-5 3-1 2-3.500 2.500 8 2.500 11.500-3z" fill="#fff" stroke="#252423" stroke-width="1.400"/></svg>
    </div>
    <svg class="notch" width="225" height="12" viewBox="0 0 225 12"><path d="M0 10.500h20L30 1l10 9.500h185" fill="none" stroke="#8a8886" stroke-width="1.200"/></svg>
    <div class="icons">
      <svg viewBox="0 0 23 23"><path class="w" d="M1 3h7v5H1zM1 13.500h9v5H1z"/><path class="bl" d="M7.500 3H15v5H7.500z"/><path class="gy" d="M10 13.500h10v5H10z"/><use href="#i-axes"/></svg>
      <svg viewBox="0 0 23 23"><path class="w" d="M5 14h5v8H5zM15 13h5v9h-5z"/><path class="bl" d="M5 7h5v8H5z"/><path class="gy" d="M15 2.500h5V13h-5z"/><use href="#i-axes"/></svg>
      <svg viewBox="0 0 23 23"><path class="bl" d="M1 1h21v4.500H1z"/><path class="w" d="M1 5.500h12v4H1zM1 15.500h15V20H1z"/><path class="gy" d="M1 11h9v4.500H1z"/><use href="#i-axes"/></svg>
      <svg viewBox="0 0 23 23"><path class="bl" d="M2 1.500h5V22H2z"/><path class="w" d="M7 9.500h5V22H7zM17 6.500h5V22h-5z"/><path class="gy" d="M12 12.500h5V22h-5z"/><use href="#i-axes"/></svg>
      <svg viewBox="0 0 23 23"><path class="w" d="M1 3h5v5H1zM1 13.500h12v5H1z"/><path class="bl" d="M5.500 3H20v5H5.500z"/><path class="gy" d="M13 13.500h7v5h-7z"/><use href="#i-axes"/></svg>
      <svg viewBox="0 0 23 23"><path class="w" d="M5 16h5v6H5zM15 9.500h5V22h-5z"/><path class="bl" d="M5 2.500h5V17H5z"/><path class="gy" d="M15 2.500h5v7h-5z"/><use href="#i-axes"/></svg>

      <svg viewBox="0 0 23 23"><path d="M1 17L13.500 4.500 19 11l4-4" fill="none" stroke="#0f6cbd" stroke-width="1.500"/><path d="M1 13L7.500 5.500l6 6L22 4" fill="none" stroke="#3b3a39" stroke-width="1.500"/><use href="#i-axes"/></svg>
      <svg viewBox="0 0 23 23"><path class="gy" d="M10 22l8-20 5 12v8z"/><path class="w" d="M1 14L7.500 2.500 16 14l-5 8H1z"/><path class="bl" d="M.8 14.500l6.500 5 5-8.500L22 22.200H.8z"/></svg>
      <svg viewBox="0 0 23 23"><path class="w0" d="M1 11h22v11H1z"/><path class="bl" d="M1 5l7 6 8-7 3 2h4v9l-5-4-8 8-9-8z"/><use href="#i-axes"/></svg>
      <svg viewBox="0 0 23 23"><path class="w0" d="M1 3h22v19H1z"/><path class="bl" d="M1 2.500h22v13L17.500 10 11 17l-3-4-3 3-4-5z"/><use href="#i-axes"/></svg>
      <svg viewBox="0 0 23 23"><path class="bl" d="M5 2.500h5V17H5z"/><path class="gy" d="M15 2.500h5v7h-5z"/><path class="w" d="M15 9.500h5V22h-5zM5 17h5v5H5z"/><path d="M1 18l7-6 6 5 9-9" fill="none" stroke="#3b3a39" stroke-width="1.400"/><use href="#i-axes"/></svg>
      <svg viewBox="0 0 23 23"><path class="bl" d="M4 10h6v12H4z"/><path class="w" d="M10 1.500h5V22h-5z"/><path class="gy" d="M15 6h5v16h-5z"/><path d="M1 18l7-6 6 5 9-9" fill="none" stroke="#3b3a39" stroke-width="1.400"/><use href="#i-axes"/></svg>

      <svg viewBox="0 0 23 23"><path d="M1 9h5l5 4 5-4h6M1 17h21" stroke="#d96f00" stroke-width="3.500" fill="none"/><path d="M1 4q6 0 10 4 5 2 11-4" stroke="#979593" stroke-width="4" fill="none"/><path d="M1 10q5 0 8 6 5 4 8-4 2-3 5-3" stroke="#0f6cbd" stroke-width="4.500" fill="none"/><path d="M1 10q5 0 8 6 5 4 8-4 2-3 5-3" stroke="#83bdee" stroke-width="2" fill="none"/><use href="#i-axes"/></svg>
      <svg viewBox="0 0 23 23"><path class="w" d="M4 6.500h5V22H4zM17 1.500h5V22h-5z"/><path class="gy" d="M9 6.500h4V12H9z"/><path d="M13 2h4v11h-4z" fill="#0f6cbd"/><use href="#i-axes"/></svg>
      <svg viewBox="0 0 23 23"><path class="bl" d="M.8 1.500h21.400v6H.8zM4.500 7.500h14v7h-14zM7.500 14.500h8v6h-8z"/></svg>
      <svg viewBox="0 0 23 23"><path d="M16 1h4.500v4.500H16zM4 15h4v4H4z" fill="#3b3a39"/><path d="M4.500 5.500h3.500V9H4.500zM10.500 9.500H14V13h-3.500zM16.500 14H20v3.500h-3.500z" fill="#83bdee" stroke="#3a96dd" stroke-width=".6"/><use href="#i-axes"/></svg>
      <svg viewBox="0 0 23 23"><circle class="w" cx="11.500" cy="11.500" r="10.500"/><path class="bl" d="M11.500 1a10.500 10.500 0 0 1 7.500 18l-7.500-7.500z"/></svg>
      <svg viewBox="0 0 23 23"><circle cx="11.500" cy="11.500" r="8" fill="none" stroke="#0f6cbd" stroke-width="7"/><circle cx="11.500" cy="11.500" r="8" fill="none" stroke="#83bdee" stroke-width="4.600"/><path class="w" d="M11.500 1v5.500a5 5 0 0 0-5 5H1A10.500 10.500 0 0 1 11.500 1z"/></svg>

      <svg viewBox="0 0 23 23"><path class="w" d="M1 1h21v21H1z"/><path class="bl" d="M1 1h10.500v21H1zM1 13.500h10.500"/><path d="M11.500 7H22M16.500 7v15M16.500 14.500H22" fill="none" stroke="#3b3a39" stroke-width="1.400"/></svg>
      <svg viewBox="0 0 23 23"><circle class="w" cx="13" cy="10" r="7.500"/><path d="M8 6q4-4 6-2-1 5-6 6zM15 9q3-2 5 0-1 5-4 5zM9 12q4 0 4 4-3 0-4-4z" fill="#2e9e4b"/><path d="M8 1.500Q3 5 3.500 11q2 8 10 8.500 4 0 6-1.500M13 19v3M5 22.200h15" fill="none" stroke="#3b3a39" stroke-width="1.500"/></svg>
      <svg viewBox="0 0 23 23"><path class="gy" d="M1 2q5 2 10 1 6 0 11-1v11q-2 7-8 7l-4 1q-8-3-9-12z"/><path class="bl" d="M1 2q4 2 8 1 1 4-1 7H1zM12 11h10q0 7-8 9.500l-3-3z"/></svg>
      <svg viewBox="0 0 23 23"><path d="M16 0L1 23l13-6z" fill="#41a5d8"/><path d="M16 0l5 23-9-6z" fill="#1b72ad"/></svg>
      <svg viewBox="0 0 23 23"><path class="w" d="M.8 15.500A10.700 10.700 0 0 1 22.200 15.500H17a5.500 5.500 0 0 0-11 0z"/><path class="bl" d="M8 5.500A10.700 10.700 0 0 1 22.200 15.500H17A5.500 5.500 0 0 0 9.500 11z"/><path d="M9.500 15.500L18 8l-5 8z" fill="#3b3a39"/></svg>
      <svg viewBox="0 0 23 23" class="ov"><path class="w" d="M1 3h21v17H1z"/><text x="3" y="14" class="num">123</text><path d="M3 17h17" stroke="#979593" stroke-width="1.200"/></svg>

      <svg viewBox="0 0 23 23"><path class="w" d="M1 1h21v21H1z"/><path d="M4.500 4v15" stroke="#979593" stroke-width="1.300"/><path d="M7 6.500h12M7 14.500h12" stroke="#0f6cbd" stroke-width="2"/><path d="M7 9.500h6M7 17.500h5" stroke="#979593" stroke-width="1.300"/></svg>
      <svg viewBox="0 0 23 23"><path class="w" d="M1 3h21v17H1z"/><path d="M4 12l3.500-7 3.500 7z" fill="#2e9e4b"/><path d="M13 5h7l-3.500 7z" fill="#d92c2c"/><path d="M3 16h17" stroke="#979593" stroke-width="1.400"/></svg>
      <svg viewBox="0 0 23 23"><path class="w" d="M1 1h21v21H1z"/><path class="gy" d="M1 1h21v3H1zM4.500 8.500h3.500V12H4.500zM4.500 15h3.500v3.500H4.500z"/><path d="M10.500 10h15v14h-15z" fill="#f3f2f1"/><path class="w" d="M12 12h11l-4 5v5.500h-3V17z"/></svg>
      <svg viewBox="0 0 23 23"><path class="w" d="M1 1h21v21H1z"/><path class="gy" d="M1 1h21v3.500H1z"/><path d="M1 10h21M1 16h21M8 4.500V22M15 4.500V22" stroke="#797775" stroke-width="1.200"/><path d="M1 1h21v21H1z" fill="none" stroke="#3b3a39" stroke-width="1.500"/></svg>
      <svg viewBox="0 0 23 23"><path class="w" d="M1 1h21v21H1z"/><path d="M15 4.500h7V22H1v-6h14z" fill="#83bdee"/><path class="gy" d="M1 1h21v3.500H1z"/><path d="M1 10h21M1 16h21M8 4.500V22M15 4.500V22" stroke="#0f6cbd" stroke-width="1.200"/><path d="M1 1h21v21H1z" fill="none" stroke="#3b3a39" stroke-width="1.500"/></svg>
      <svg viewBox="0 0 23 23" class="ov"><text x="4" y="19" class="ltr">R</text></svg>

      <svg viewBox="0 0 23 23" class="ov"><text x="-1" y="17" class="ltr">Py</text></svg>
      <svg><use href="#i-key" width="23" height="23"/></svg>
      <svg><use href="#i-tree" width="23" height="23"/></svg>
      <svg><use href="#i-qa" width="23" height="23"/></svg>
      <svg><use href="#i-narr" width="23" height="23"/></svg>
      <svg viewBox="0 0 23 23"><path class="w" d="M6 1h11v8q-1 6-5.500 6T6 9zM6 3.500H1Q1 10 6.500 11M17 3.500h5Q22 10 16.500 11M11.500 15v4"/><path d="M6 1h11v3.500H6z" fill="#83bdee" stroke="#0f6cbd"/><path class="bl" d="M6 22v-3h11v3z"/></svg>

      <svg><use href="#i-pag" width="23" height="23"/></svg>
      <svg viewBox="0 0 23 23" class="ov"><path class="w" d="M1 4h21v16H1z"/><text x="4" y="15" class="num">123</text><path d="M3 17h17" stroke="#979593" stroke-width="1.200"/><path class="bolt" d="M3-2h7L7 4h3L1 13l2-7H-1z"/></svg>
      <svg viewBox="0 0 23 23" class="ov"><path class="w" d="M1 1h21v21H1z"/><path class="gy" d="M8 1h14v3H8zM4.500 15h3.500v3.500H4.500z"/><path d="M10.500 10h14v14h-14z" fill="#f3f2f1"/><path class="w" d="M12 12h11l-4 5v5.500h-3V17z"/><path class="bolt" d="M3-2h7L7 4h3L1 13l2-7H-1z"/></svg>
      <svg viewBox="0 0 23 23" class="ov"><path d="M1 1h21v21H1z" fill="#fff" stroke="#0f6cbd" stroke-width="1.600"/><path d="M22 2l-9 5-4 8-8 3v4h14l-2-7 9-4z" fill="#83bdee" stroke="#0f6cbd"/><path d="M14 12h10v12H14z" fill="#f3f2f1"/><circle cx="19" cy="20" r="3.400" fill="#d96f00"/><circle cx="22" cy="14" r="2.200" fill="#d96f00"/><path d="M3 13q-5-6-5-10 0-4 5-4t5 4q0 4-5 10z" fill="#d96f00" stroke="#f3f2f1"/><circle cx="3" cy="3" r="1.400" fill="#fff"/></svg>
      <svg><use href="#i-apps" width="23" height="23"/></svg>
      <svg><use href="#i-auto" width="23" height="23"/></svg>
    </div>
    <svg class="more" width="20" height="4" viewBox="0 0 20 4"><path d="M0 1h2v2H0zM8 1h2v2H8zM16 1h2v2h-2z" fill="#252423"/></svg>
    <div class="wells">
      <label>Values</label>
      <div class="well a">Add data fields here</div>
      <label class="tt">Tooltip</label>
      <div class="keep">Keep all filters<span class="toggle">On<i></i></span></div>
      <div class="well b">Drag tooltip fields here</div>
    </div>
  </aside>

  <aside class="pane data">
    <h3>Data<svg width="16" height="16"><use href="#i-dbl"/></svg></h3>
    <div class="search"><svg width="19" height="19" viewBox="0 0 19 19"><circle cx="7.500" cy="7.500" r="6.300" fill="none" stroke="#605e5c" stroke-width="1.300"/><path d="M12 12l6 6" stroke="#605e5c" stroke-width="1.400"/></svg>Search</div>
    <div class="list">
      <div class="tree">
        <div class="root"><svg width="14" height="8" viewBox="0 0 14 8"><path d="M.5.500L7 7 13.500.500" fill="none" stroke="#605e5c" stroke-width="1.300"/></svg><svg width="16" height="16"><use href="#t-table"/></svg>financials</div>
        <div class="f"><i></i><svg><use href="#t-sum"/></svg>Sales</div>
        <div class="f"><i></i><svg><use href="#t-sum"/></svg>COGS</div>
        <div class="f"><i></i><svg></svg>Country</div>
        <div class="f exp"><i></i><svg><use href="#t-cal"/></svg>Date</div>
        <div class="f"><i></i><svg></svg>Discount Band</div>
        <div class="f"><i></i><svg><use href="#t-col"/></svg>Discount Prec...</div>
        <div class="f"><i></i><svg><use href="#t-sum"/></svg>Discounts</div>
        <div class="f"><i></i><svg><use href="#t-col"/></svg>Gorss Profit</div>
        <div class="f"><i></i><svg><use href="#t-sum"/></svg>Gross Sales</div>
        <div class="f"><i></i><svg><use href="#t-sum"/></svg>Manufacturin...</div>
        <div class="f"><i></i><svg></svg>Month Name</div>
        <div class="f"><i></i><svg><use href="#t-sum"/></svg>Month Number</div>
        <div class="f"><i></i><svg></svg>Product</div>
        <div class="f"><i></i><svg><use href="#t-sum"/></svg>Profit</div>
        <div class="f"><i></i><svg><use href="#t-sum"/></svg>Sale Price</div>
        <div class="f"><i></i><svg></svg>Segment</div>
        <div class="f"><i></i><svg><use href="#t-col"/></svg>Total COGS</div>
        <div class="f"><i></i><svg><use href="#t-calc"/></svg>Total Discounts</div>
        <div class="f"><i></i><svg><use href="#t-calc"/></svg>Total Gross Pr...</div>
        <div class="f"><i></i><svg><use href="#t-calc"/></svg>Total Net Sales</div>
        <div class="f"><i></i><svg><use href="#t-calc"/></svg>Total Profit</div>
        <div class="f"><i></i><svg><use href="#t-col"/></svg>Total Sales</div>
      </div>
      <div class="bar"></div>
    </div>
  </aside>
</main>

<footer class="status">
  <span>Page 4 of 8</span>
  <div class="zoom">
    <svg width="170" height="20" viewBox="0 0 170 20"><path d="M0 10.500h8M146 10.500h11M151.500 5v11" stroke="#484644" stroke-width="1.500"/><path d="M50 5h5v12h-5z" fill="#484644"/><path d="M72 8v8" stroke="#484644" stroke-width="1.400"/></svg>
    <span class="pct">71%</span>
    <svg class="fit" width="21" height="18" viewBox="0 0 21 18"><path d="M1 1h19v16H1zM4 8V4.500h4M13 4.500h4V8" fill="none" stroke="#605e5c" stroke-width="1.500"/></svg>
    <span>Update available (click to download)</span>
  </div>
</footer>
</body>
</html>
```

FILE: styles.css
```css
* { box-sizing: border-box; }
html, body { margin: 0; }
body {
  width: 1919px; height: 961px; overflow: hidden;
  display: flex; flex-direction: column;
  font: 14px "Open Sans", "Noto Sans", sans-serif; color: #252423; background: #f3f2f1;
}
svg { display: block; flex: none; overflow: visible; }
.defs { position: absolute; }
button { font: inherit; border: 0; }
h1, h2, h3, h4, ul { margin: 0; padding: 0; font-weight: 400; }

/* menu */
.menu { height: 38px; flex: none; display: flex; justify-content: space-between; background: #fafafa; padding: 4px 6px 0 28px; }
.tabs { display: flex; font-size: 16.9px; line-height: 30px; }
.tabs a { height: 33px; white-space: nowrap; }
.tabs a:nth-child(1) { width: 74px; }
.tabs a:nth-child(2) { width: 85px; }
.tabs a:nth-child(3) { width: 45px; margin-right: 40px; font-weight: 600; font-size: 16.4px; border-bottom: 3px solid #117865; }
.tabs a:nth-child(4) { width: 113px; }
.tabs a:nth-child(5) { width: 76px; }
.tabs a:nth-child(6) { width: 109px; }
.share { width: 105px; height: 30px; border-radius: 4px; background: #117865; color: #fff; font-size: 14.5px; font-weight: 600; display: flex; align-items: center; justify-content: space-between; padding: 0 8px; }

/* ribbon */
.ribbon { height: 118px; flex: none; display: flex; background: #fafafa; padding-top: 6px; position: relative; box-shadow: 0 1px 4px rgba(0,0,0,.25); z-index: 2; }
.group { height: 110px; border-right: 1px solid #d2d0ce; display: flex; flex-direction: column; justify-content: space-between; }
.tools { display: flex; padding-top: 5px; }
.g-pages { width: 74px; }
.g-vis { width: 133px; } .g-vis .tools { padding-left: 7px; }
.g-ai { width: 318px; } .g-ai .tools { padding-left: 9px; }
.g-pp { width: 211px; } .g-pp .tools { padding-left: 10px; }
.g-el { width: 228px; } .g-el .tools { padding-left: 12px; }
.g-sp { width: 85px; } .g-sp .tools { padding-left: 6px; }
.tool { display: flex; flex-direction: column; align-items: center; font-size: 14.1px; line-height: 20px; text-align: center; white-space: nowrap; color: #3b3a39; }
.tool > svg { margin-bottom: 6px; height: 38px; }
.tool .chev { display: inline-block; width: 8px; height: 6px; vertical-align: 1px; margin-left: -1px; }
.off { color: #c8c6c4; }
.w46 { width: 46px; } .w50 { width: 50px; } .w52 { width: 52px; } .w56 { width: 56px; } .w58 { width: 58px; }
.w62 { width: 62px; } .w70 { width: 70px; } .w72 { width: 72px; } .w74 { width: 74px; } .w108 { width: 108px; }
.group small { font-size: 11.6px; line-height: 15px; text-align: center; color: #3b3a39; }
.collapse { position: absolute; right: 6px; top: 103px; }

/* work area */
.work { height: 790px; flex: none; display: flex; }
.views { width: 51px; flex: none; }
.view { height: 50px; display: flex; align-items: center; justify-content: center; padding-bottom: 1px; }
.view.on { border-left: 3px solid #117865; padding-right: 2px; padding-bottom: 0; }
.dax { font-size: 9px; font-weight: 600; fill: #605e5c; stroke: #f3f2f1; stroke-width: 1.5px; paint-order: stroke; }
.center { width: 1191px; flex: none; display: flex; flex-direction: column; }
.stage { height: 746px; display: flex; background: #fff; }
.canvas {
  width: 1151px; padding-top: 47px; border-left: 3px solid #484f7d; border-right: 4px solid #575a8c;
  background: radial-gradient(ellipse 54% 110% at 52% 50%, #001f54 0%, #001543 45%, #000521 80%, #00000c 100%);
}
.banner { height: 44px; background: #fff; border-top: 1px solid #8a8a9a; display: flex; padding-left: 4px; }
.back { margin-top: 7px; }
.banner h1 { width: 334px; margin: 5px 0 0 369px; font: 900 27.8px/38px Inter, "Liberation Sans", sans-serif; color: #12239e; white-space: nowrap; }
.banner h1 span { display: inline-block; transform: scaleX(1.134); transform-origin: 0 50%; }
.mark { margin: 4px 0 0 330px; }
.thumb { width: 7px; height: 31px; background: #c8c8c8; margin: 4px 0 0 43px; }
.strip { height: 3px; margin: 16px 67px 0 68px; background: linear-gradient(90deg, #5c6480, #c3cae8 20%, #8fa3d6 50%, #c3cae8 85%, #8b90a8); }
.visuals { height: 559px; display: flex; padding-left: 43px; }
.card { background: #fff; height: 559px; overflow: hidden; }
.chart { width: 530px; border: 1px solid #484644; }
.card h2 { background: #e6e6e6; text-align: center; white-space: nowrap; font-family: Inter, "Liberation Sans", sans-serif; font-weight: 900; }
.card h2 span { display: inline-block; }
.chart h2 { height: 31px; font-size: 17.2px; line-height: 28px; color: #000; }
.chart h2 span { text-decoration: underline; text-underline-offset: 2px; text-decoration-thickness: 2px; transform: scaleX(1.142); }
.mapcard { width: 513px; }
.mapcard h2 { height: 29px; border-bottom: 1px solid #a6a6a6; font-size: 16.5px; line-height: 26px; color: #252423; }
.mapcard h2 span { transform: scaleX(1.114); }
.leg text { font-size: 11.6px; fill: #000; }
.mleg text { font-size: 12px; fill: #605e5c; font-weight: 600; }
.mleg .key { font-weight: 700; }
.grid path { fill: none; stroke: #605e5c; stroke-width: 1; stroke-dasharray: 1.3 3; }
.dots path { stroke-width: 7.6; stroke-linecap: round; }
.vals text { font-size: 10.3px; fill: #605e5c; text-anchor: middle; }
.ax text { font-size: 12px; font-weight: 700; font-style: italic; fill: #000; letter-spacing: -.5px; }
.end text { text-anchor: end; } .mid text { text-anchor: middle; }
.axt { font: 900 14.5px Inter, sans-serif; fill: #000; text-anchor: middle; }
.map { width: 503px; height: 496px; margin-left: 5px; position: relative; overflow: hidden; }
.sat, .pies { position: absolute; left: 0; top: 0; width: 503px; height: 496px; overflow: hidden; }
.borders path { stroke: #c9c2ae; stroke-opacity: .42; stroke-width: 2; stroke-linejoin: round; }
.pie path { stroke-width: .06; }
.o { fill: #e66c37; stroke: #b8481a; } .b { fill: #2f9bff; stroke: #118dff; } .p { fill: #6b007b; stroke: #4a0058; }
.n { fill: #12239e; stroke: #0b1770; } .k { fill: #e044a7; stroke: #b52583; }
.places text { font-size: 11.8px; font-weight: 700; fill: #fff; text-anchor: middle; paint-order: stroke; stroke: #000; stroke-opacity: .3; stroke-width: 1.5px; }
.places .cont text { font-size: 10.8px; font-weight: 700; }
.places .ocean text { font-size: 11px; font-weight: 600; fill: #b4c6cd; }
.credit text { font-size: 8px; fill: #fff; font-weight: 600; }
.credit .copy text { font: 8.3px "Liberation Sans", sans-serif; }
.credit .u { text-decoration: underline; }
.next { width: 104px; height: 37px; margin: 18px 0 0 1026px; background: #fff; border: 3px solid #605e5c; padding: 0 0 0 3px; display: flex; align-items: center; gap: 11px; font-size: 11.8px; font-weight: 700; letter-spacing: -.4px; color: #000; white-space: nowrap; }

.filters { width: 40px; padding: 16px 0 0 12px; border-left: 1px solid #e1dfdd; }
.flip { transform: scaleX(-1); }
.fun { margin: 18px 0 0 3px; }
.filters b { display: block; margin: 9px 0 0 -3px; writing-mode: vertical-rl; font-size: 18px; line-height: 22px; letter-spacing: -.3px; }

/* page tabs */
.pages { height: 44px; display: flex; }
.devices { width: 159px; display: flex; border-left: 1px solid #e1dfdd; padding: 6px 0 0 12px; }
.dev { width: 30px; height: 32px; border-bottom: 3px solid #117865; padding: 2px 0 0 2px; margin-right: 31px; }
.arr { margin: 10px 0 0 28px; }
.ptab { background: #fff; border-left: 1px solid #c8c6c4; text-align: center; line-height: 46px; font-size: 14.2px; white-space: nowrap; position: relative; color: #252423; letter-spacing: -.1px; }
.ptab.on { font-weight: 600; box-shadow: inset 0 -5px #117865; font-size: 14px; }
.ptab i { position: absolute; right: 5px; top: 3px; font-style: normal; line-height: 16px; font-size: 13px; }
.p1 { width: 148px; } .p2 { width: 104px; } .p3 { width: 110px; } .p4 { width: 114px; }
.p5 { width: 103px; } .p6 { width: 82px; } .p7 { width: 86px; } .p8 { width: 96px; }
.plus { width: 49px; background: #117865; display: flex; align-items: center; justify-content: center; padding-bottom: 4px; }

/* side panes */
.pane { width: 226px; flex: none; border-left: 1px solid #d8d6d4; display: flex; flex-direction: column; }
.pane h3 { height: 50px; display: flex; justify-content: space-between; align-items: center; padding: 0 10px; font-size: 18.4px; font-weight: 600; }
.bm-tools { display: flex; align-items: center; height: 38px; border-bottom: 1px solid #e1dfdd; padding: 0 0 2px 14px; }
.bm-tools span { margin-left: 5px; font-size: 14px; }
.bm-tools .v { margin-left: 23px; }
.bookmarks ul { list-style: none; padding: 1px 0 0 14px; flex: 1; line-height: 32.7px; font-size: 14px; }
.bookmarks footer { height: 63px; border-top: 1px solid #c8c6c4; padding: 8px 14px 0 12px; color: #0c695a; text-decoration: underline; line-height: 20px; font-size: 14.2px; }
.viz h4 { font-size: 13.8px; font-weight: 600; line-height: 16px; height: 18px; padding-left: 10px; }
.modes { display: flex; padding: 4px 0 0 10px; height: 50px; }
.mode { width: 40px; height: 40px; border-radius: 3px; background: #d2d0ce; padding: 4px 5px; }
.brush { margin: 4px 0 0 48px; }
.notch { margin-top: -1px; }
.icons { display: grid; grid-template-columns: repeat(6, 23px); grid-auto-rows: 23px; gap: 12px; padding: 13px 0 0 14px; }
.icons svg { width: 23px; height: 23px; overflow: hidden; }
.icons .ov { overflow: visible; }
.w { fill: #fafafa; stroke: #3b3a39; stroke-width: 1.4; }
.w0 { fill: #fafafa; }
.bl { fill: #83bdee; stroke: #0f6cbd; stroke-width: 1.4; }
.gy { fill: #c8c6c4; stroke: #797775; stroke-width: 1.3; }
.bolt { fill: #ffc36b; stroke: #d96f00; stroke-width: 1.2; }
.num { font-size: 10.5px; fill: #1f86cf; }
.ltr { font-size: 20px; font-weight: 700; fill: #1f86cf; }
.more { margin: 19px 0 0 16px; }
.wells { border-top: 1px solid #e1dfdd; margin-top: 23px; padding: 11px 7px 0 5px; font-size: 13.8px; }
.wells label { display: block; padding-left: 10px; line-height: 20px; height: 26px; }
.well { border: 1px dashed #c8c6c4; border-radius: 3px; background: #fff; color: #3b3a39; }
.a { height: 35px; line-height: 33px; padding-left: 12px; }
.b { height: 33px; line-height: 31px; padding-left: 10px; }
.wells .tt { margin-top: 14px; height: 32px; font-weight: 600; color: #605e5c; font-size: 13.4px; }
.keep { display: flex; justify-content: space-between; height: 32px; padding: 0 20px 0 10px; line-height: 18px; }
.toggle { width: 40px; height: 20px; border-radius: 10px; background: #117865; color: #fff; font-size: 11px; line-height: 20px; padding-left: 6px; display: flex; align-items: center; gap: 4px; }
.toggle i { width: 10px; height: 10px; border-radius: 50%; background: #fff; }

.search { margin: 7px 5px 0 5px; height: 31px; background: #fff; border: 1px solid #d2d0ce; border-bottom-color: #605e5c; border-radius: 5px; display: flex; align-items: center; gap: 9px; padding: 2px 0 0 15px; font-size: 16px; color: #605e5c; }
.data h3 { padding-right: 10px; }
.list { height: 683px; margin-top: 9px; display: flex; overflow: hidden; }
.tree { width: 210px; flex: none; font-size: 13.8px; color: #3b3a39; padding-top: 1px; }
.root, .f { height: 30px; display: flex; align-items: center; white-space: nowrap; }
.root { padding-left: 17px; gap: 5px; } .root svg + svg { margin-right: 1px; }
.f { padding-left: 55px; position: relative; }
.f i { width: 15px; height: 15px; border: 1px solid #797775; border-radius: 2px; margin-right: 10px; }
.f svg { width: 17px; height: 17px; margin-right: 5px; }
.exp::before { content: ""; position: absolute; left: 34px; top: 10px; width: 9px; height: 9px; border: solid #605e5c; border-width: 1px 1px 0 0; transform: rotate(45deg); }
.bar { width: 10px; height: 596px; background: #c8c8c8; }

.status { height: 15px; border-top: 1px solid #d8d6d4; background: #f3f2f1; display: flex; justify-content: space-between; overflow: hidden; padding: 4px 5px 0 5px; font-size: 13.8px; line-height: 20px; color: #484644; white-space: nowrap; }
.zoom { display: flex; font-size: 14.1px; } .zoom .pct { margin-top: -2px; font-size: 13.5px; }
.fit { margin: 3px 16px 0 25px; }
```
